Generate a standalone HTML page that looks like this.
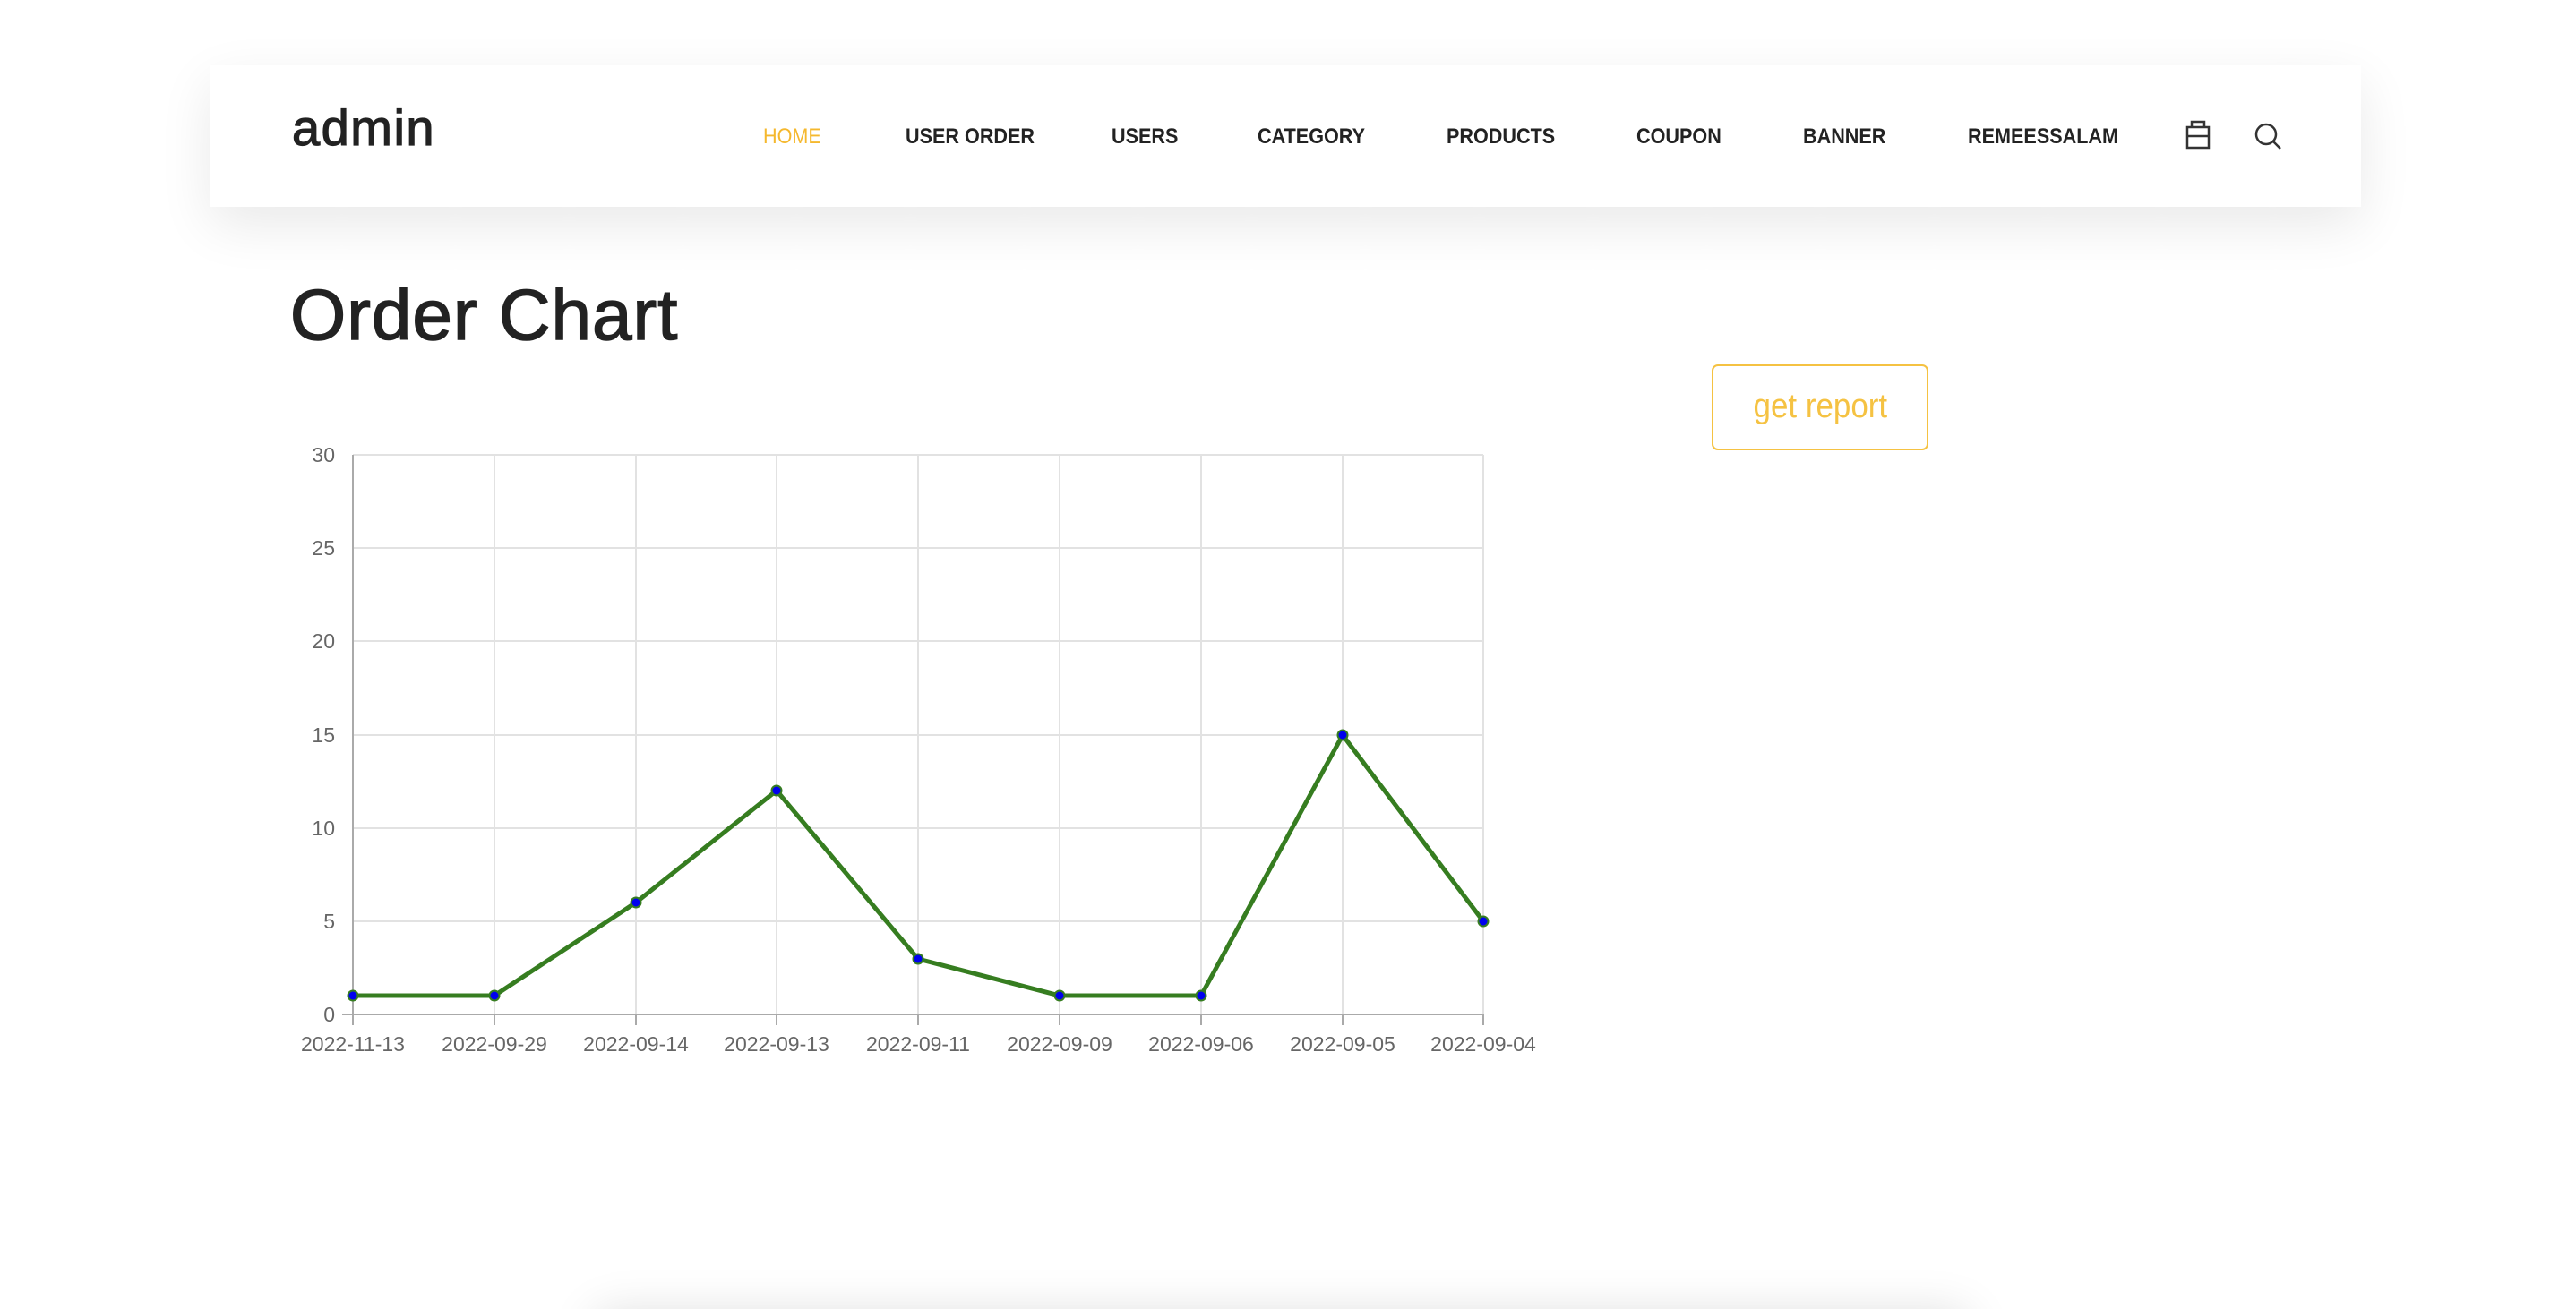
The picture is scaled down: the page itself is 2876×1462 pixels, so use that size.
<!DOCTYPE html>
<html><head><meta charset="utf-8"><style>
html,body{margin:0;padding:0;background:#fff;width:2876px;height:1462px;overflow:hidden;position:relative;font-family:"Liberation Sans",sans-serif}
.hdr{position:absolute;left:235px;top:73px;width:2401px;height:158px;background:#fff;box-shadow:0 20px 60px rgba(0,0,0,.09)}
.logo{position:absolute;left:326px;top:110px;font-size:56px;font-weight:normal;-webkit-text-stroke:1.2px #222;color:#222;letter-spacing:1.5px}
.nav{position:absolute;top:139px;font-size:24px;font-weight:bold;color:#222;white-space:nowrap;transform:scaleX(0.9);transform-origin:left}
h1{position:absolute;left:324px;top:306px;margin:0;font-size:80px;font-weight:normal;-webkit-text-stroke:1.5px #222;color:#222;letter-spacing:1px}
.btn{position:absolute;left:1911px;top:407px;width:238px;height:92px;border:2px solid #f5c242;border-radius:7px;color:#f5c242;font-size:38px;text-align:center;line-height:90px}
.btn span{display:inline-block;transform:scaleX(0.92)}
.clip{position:absolute;left:0;top:1360px;width:2876px;height:102px;overflow:hidden}
.foot{position:absolute;left:666px;top:108px;width:1530px;height:200px;background:#fff;box-shadow:0 0 50px rgba(0,0,0,.14)}
</style></head><body>
<div class="hdr"></div>
<div class="logo">admin</div>
<div class="nav" style="left:852px;color:#f5b82e;font-weight:normal">HOME</div>
<div class="nav" style="left:1011px">USER ORDER</div>
<div class="nav" style="left:1241px">USERS</div>
<div class="nav" style="left:1404px">CATEGORY</div>
<div class="nav" style="left:1615px">PRODUCTS</div>
<div class="nav" style="left:1827px">COUPON</div>
<div class="nav" style="left:2013px">BANNER</div>
<div class="nav" style="left:2197px">REMEESSALAM</div>
<svg style="position:absolute;left:0;top:0" width="2876" height="1462">
<g fill="none" stroke="#333" stroke-width="2.5">
<rect x="2442" y="142" width="24" height="23"/><line x1="2442" y1="152" x2="2466" y2="152"/><path d="M2447 142V136H2461V142"/>
<circle cx="2530" cy="150" r="11"/><line x1="2538" y1="158" x2="2546" y2="166"/>
</g>
<g stroke="#e2e2e2" stroke-width="2">
<line x1="394" y1="508" x2="1656" y2="508"/><line x1="394" y1="612" x2="1656" y2="612"/><line x1="394" y1="716" x2="1656" y2="716"/><line x1="394" y1="821" x2="1656" y2="821"/><line x1="394" y1="925" x2="1656" y2="925"/><line x1="394" y1="1029" x2="1656" y2="1029"/>
<line x1="552" y1="508" x2="552" y2="1133"/><line x1="710" y1="508" x2="710" y2="1133"/><line x1="867" y1="508" x2="867" y2="1133"/><line x1="1025" y1="508" x2="1025" y2="1133"/><line x1="1183" y1="508" x2="1183" y2="1133"/><line x1="1341" y1="508" x2="1341" y2="1133"/><line x1="1499" y1="508" x2="1499" y2="1133"/><line x1="1656" y1="508" x2="1656" y2="1133"/>
</g>
<g stroke="#aaa" stroke-width="2"><line x1="394" y1="508" x2="394" y2="1145"/><line x1="382" y1="1133" x2="1656" y2="1133"/>
<line x1="552" y1="1133" x2="552" y2="1145"/><line x1="710" y1="1133" x2="710" y2="1145"/><line x1="867" y1="1133" x2="867" y2="1145"/><line x1="1025" y1="1133" x2="1025" y2="1145"/><line x1="1183" y1="1133" x2="1183" y2="1145"/><line x1="1341" y1="1133" x2="1341" y2="1145"/><line x1="1499" y1="1133" x2="1499" y2="1145"/><line x1="1656" y1="1133" x2="1656" y2="1145"/></g>
<g font-family="Liberation Sans,sans-serif" font-size="23" fill="#666" text-anchor="end">
<text x="374" y="516">30</text><text x="374" y="620">25</text><text x="374" y="724">20</text><text x="374" y="829">15</text><text x="374" y="933">10</text><text x="374" y="1037">5</text><text x="374" y="1141">0</text>
</g>
<g font-family="Liberation Sans,sans-serif" font-size="23" fill="#666" text-anchor="middle">
<text x="394" y="1174">2022-11-13</text><text x="552" y="1174">2022-09-29</text><text x="710" y="1174">2022-09-14</text><text x="867" y="1174">2022-09-13</text><text x="1025" y="1174">2022-09-11</text><text x="1183" y="1174">2022-09-09</text><text x="1341" y="1174">2022-09-06</text><text x="1499" y="1174">2022-09-05</text><text x="1656" y="1174">2022-09-04</text>
</g>
<polyline fill="none" stroke="#367d20" stroke-width="5" points="394,1112 552,1112 710,1008 867,883 1025,1071 1183,1112 1341,1112 1499,821 1656,1029"/>
<g fill="#0000ee" stroke="#367d20" stroke-width="2">
<circle cx="394" cy="1112" r="5.5"/><circle cx="552" cy="1112" r="5.5"/><circle cx="710" cy="1008" r="5.5"/><circle cx="867" cy="883" r="5.5"/><circle cx="1025" cy="1071" r="5.5"/><circle cx="1183" cy="1112" r="5.5"/><circle cx="1341" cy="1112" r="5.5"/><circle cx="1499" cy="821" r="5.5"/><circle cx="1656" cy="1029" r="5.5"/>
</g>
</svg>
<h1>Order Chart</h1>
<div class="btn"><span>get report</span></div>
<div class="clip"><div class="foot"></div></div>
</body></html>
